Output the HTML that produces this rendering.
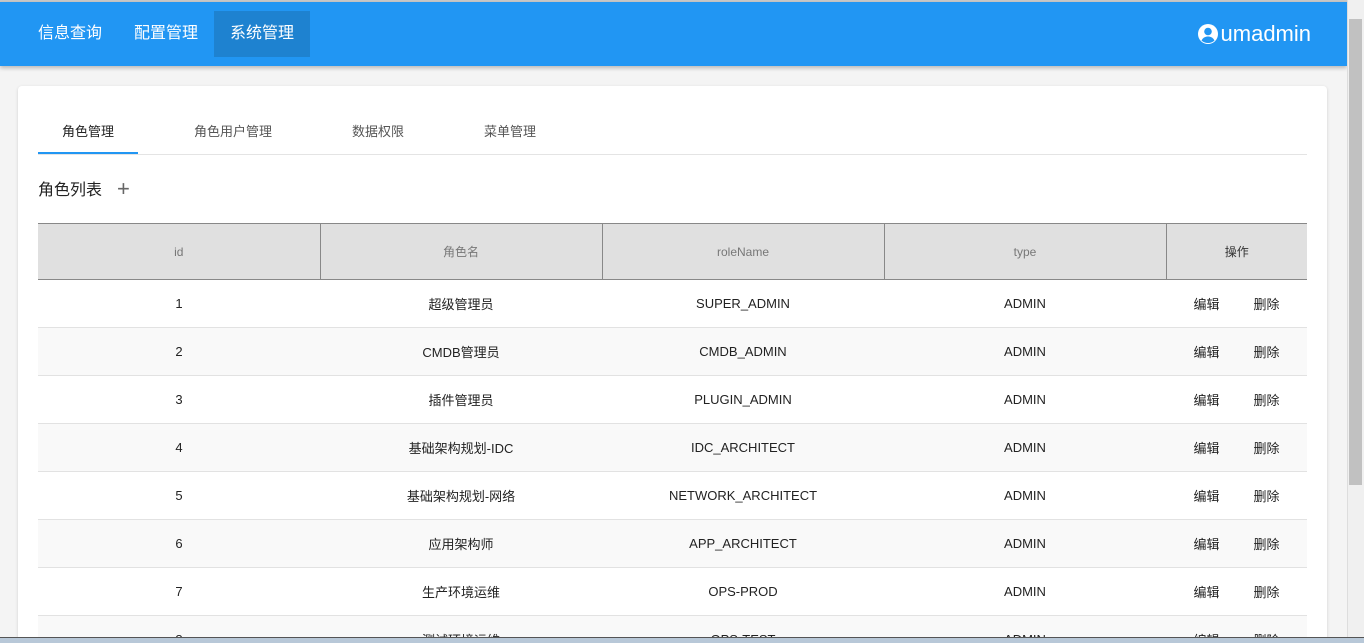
<!DOCTYPE html>
<html><head><meta charset="utf-8"><style>
*{box-sizing:border-box;margin:0;padding:0}
html,body{width:1364px;height:643px;overflow:hidden}
body{background:#f4f4f4;font-family:"Liberation Sans","Noto Sans CJK SC",sans-serif;position:relative}
.top{position:absolute;left:0;top:0;width:1347px;height:2px;background:#c8c8c8}
.bar{position:absolute;left:0;top:2px;width:1347px;height:64px;background:#2196f3;box-shadow:0 2px 4px rgba(0,0,0,.25)}
.nav{position:absolute;top:9px;height:46px;line-height:46px;color:#fff;font-size:16px;padding:0 16px}
.user{position:absolute;right:36px;top:19px;color:#fff;font-size:22px;display:flex;align-items:center;gap:2px}
.sb{position:absolute;left:1347px;top:0;width:17px;height:637px;background:#f0f0f0;border-left:1px solid #ddd}
.thumb{position:absolute;left:1349px;top:19px;width:13px;height:466px;background:#c1c1c1}
.card{position:absolute;left:18px;top:86px;width:1309px;height:560px;background:#fff;border-radius:4px;box-shadow:0 1px 3px rgba(0,0,0,.15)}
.tab{position:absolute;top:121px;font-size:13px;color:#555}
table{position:absolute;left:38px;top:223px;width:1269px;border-collapse:collapse;font-size:13px;color:#222}
th{height:56px;background:#e0e0e0;font-weight:normal;color:#777;font-size:12px;border-top:1px solid #888;border-bottom:1px solid #888;border-left:1px solid #888}
th:first-child{border-left:none}
td{height:48px;text-align:center;border-bottom:1px solid #e2e2e2}
tr:nth-child(odd) td{background:#f9f9f9}
.op span{display:inline-block;margin:0 17px}
.task{position:absolute;left:0;top:637px;width:1364px;height:6px;background:#b8c8d8;border-top:1px solid #555}
</style></head><body>
<div class="top"></div>
<div class="bar">
<div class="nav" style="left:22px">信息查询</div>
<div class="nav" style="left:118px">配置管理</div>
<div class="nav" style="left:214px;background:#1e82d0;width:96px">系统管理</div>
<div class="user"><svg width="22" height="22" viewBox="0 0 22 22"><circle cx="11" cy="11" r="10" fill="#fff"/><circle cx="11" cy="8.5" r="3.8" fill="#2196f3"/><path d="M4.5 17.5c1.5-3 4-4 6.5-4s5 1 6.5 4c-1.8 1.6-4 2.5-6.5 2.5s-4.7-.9-6.5-2.5z" fill="#2196f3"/></svg>umadmin</div>
</div>
<div class="sb"></div><div class="thumb"></div>
<div class="card"></div>
<div class="tab" style="left:62px;color:#222">角色管理</div>
<div class="tab" style="left:194px">角色用户管理</div>
<div class="tab" style="left:352px">数据权限</div>
<div class="tab" style="left:484px">菜单管理</div>
<div style="position:absolute;left:38px;top:154px;width:1269px;height:1px;background:#e4e4e4"></div>
<div style="position:absolute;left:38px;top:152px;width:100px;height:2px;background:#2196f3"></div>
<div style="position:absolute;left:38px;top:176px;font-size:16px;color:#222">角色列表</div>
<div style="position:absolute;left:117px;top:176px;font-size:22px;color:#666;font-weight:300">+</div>
<table>
<tr><th style="width:282px">id</th><th style="width:282px">角色名</th><th style="width:282px">roleName</th><th style="width:282px">type</th><th style="color:#333">操作</th></tr>
<tr><td>1</td><td>超级管理员</td><td>SUPER_ADMIN</td><td>ADMIN</td><td class="op"><span>编辑</span><span>删除</span></td></tr>
<tr><td>2</td><td>CMDB管理员</td><td>CMDB_ADMIN</td><td>ADMIN</td><td class="op"><span>编辑</span><span>删除</span></td></tr>
<tr><td>3</td><td>插件管理员</td><td>PLUGIN_ADMIN</td><td>ADMIN</td><td class="op"><span>编辑</span><span>删除</span></td></tr>
<tr><td>4</td><td>基础架构规划-IDC</td><td>IDC_ARCHITECT</td><td>ADMIN</td><td class="op"><span>编辑</span><span>删除</span></td></tr>
<tr><td>5</td><td>基础架构规划-网络</td><td>NETWORK_ARCHITECT</td><td>ADMIN</td><td class="op"><span>编辑</span><span>删除</span></td></tr>
<tr><td>6</td><td>应用架构师</td><td>APP_ARCHITECT</td><td>ADMIN</td><td class="op"><span>编辑</span><span>删除</span></td></tr>
<tr><td>7</td><td>生产环境运维</td><td>OPS-PROD</td><td>ADMIN</td><td class="op"><span>编辑</span><span>删除</span></td></tr>
<tr><td>8</td><td>测试环境运维</td><td>OPS-TEST</td><td>ADMIN</td><td class="op"><span>编辑</span><span>删除</span></td></tr>
</table>
<div class="task"></div>
</body></html>
